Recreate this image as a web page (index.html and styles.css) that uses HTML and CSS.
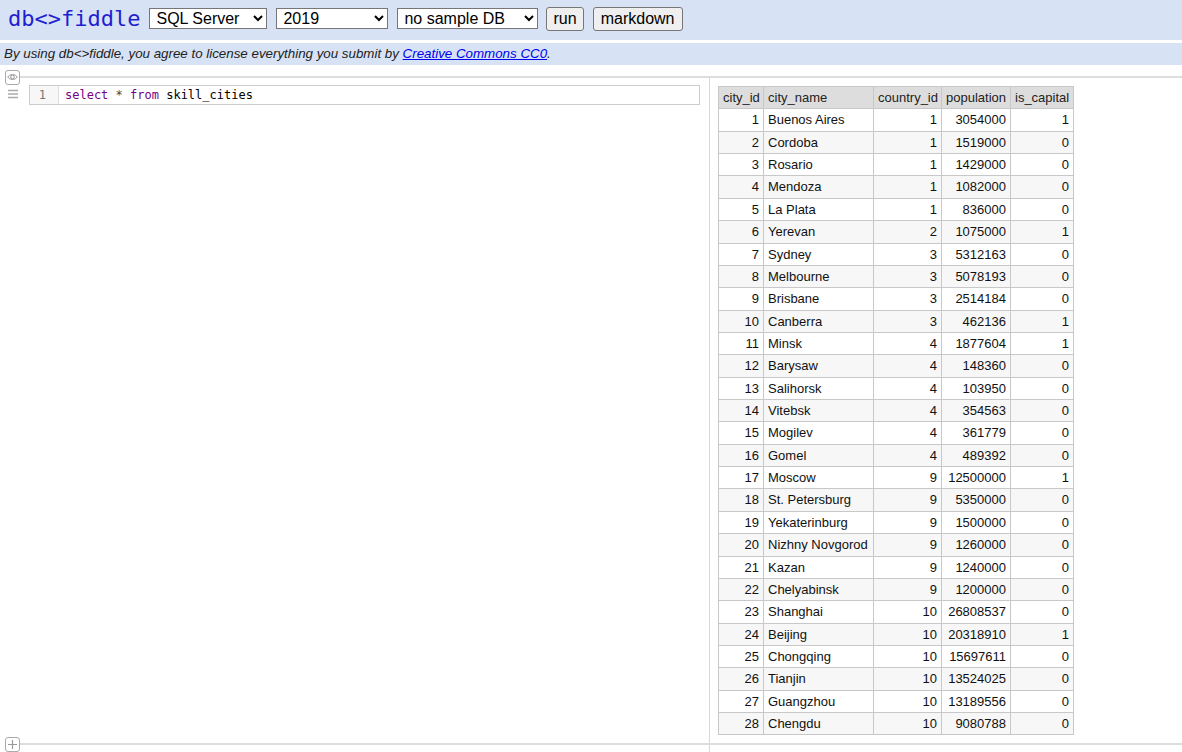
FILE: index.html
```html
<!DOCTYPE html>
<html>
<head>
<meta charset="utf-8">
<title>db&lt;&gt;fiddle</title>
<link rel="stylesheet" href="styles.css">
</head>
<body>
<header class="topbar">
  <span class="logo">db&lt;&gt;fiddle</span>
  <select class="sel sel-engine"><option>SQL Server</option></select>
  <select class="sel sel-version"><option>2019</option></select>
  <select class="sel sel-sample"><option>no sample DB</option></select>
  <button class="btn">run</button>
  <button class="btn btn-md">markdown</button>
</header>
<div class="notice">By using db&lt;&gt;fiddle, you agree to license everything you submit by <a href="#">Creative Commons CC0</a>.</div>

<div class="sep sep-top">
  <span class="sep-icon">
    <svg width="11" height="8" viewBox="0 0 11 8"><path d="M0.8 4 C2.5 0.8 8.5 0.8 10.2 4 C8.5 7.2 2.5 7.2 0.8 4 Z" fill="none" stroke="#999" stroke-width="1"/><circle cx="5.5" cy="4" r="1.8" fill="none" stroke="#999" stroke-width="1"/></svg>
  </span>
  <span class="sep-line"></span>
</div>

<div class="batch">
  <div class="left">
    <span class="handle">
      <svg width="10" height="10" viewBox="0 0 10 10"><path d="M0 1.5H10M0 5H10M0 8.5H10" stroke="#aaa" stroke-width="1.4"/></svg>
    </span>
    <div class="editor">
      <div class="gutter">1</div>
      <div class="code"><span class="kw">select</span> <span class="op">*</span> <span class="kw">from</span> skill_cities</div>
    </div>
  </div>
  <div class="right">
    <table class="result">
      <colgroup>
        <col class="c-id"><col class="c-name"><col class="c-country"><col class="c-pop"><col class="c-cap">
      </colgroup>
      <thead>
        <tr><th>city_id</th><th>city_name</th><th>country_id</th><th>population</th><th>is_capital</th></tr>
      </thead>
      <tbody>
        <tr><td class="n">1</td><td>Buenos Aires</td><td class="n">1</td><td class="n">3054000</td><td class="n">1</td></tr>
        <tr><td class="n">2</td><td>Cordoba</td><td class="n">1</td><td class="n">1519000</td><td class="n">0</td></tr>
        <tr><td class="n">3</td><td>Rosario</td><td class="n">1</td><td class="n">1429000</td><td class="n">0</td></tr>
        <tr><td class="n">4</td><td>Mendoza</td><td class="n">1</td><td class="n">1082000</td><td class="n">0</td></tr>
        <tr><td class="n">5</td><td>La Plata</td><td class="n">1</td><td class="n">836000</td><td class="n">0</td></tr>
        <tr><td class="n">6</td><td>Yerevan</td><td class="n">2</td><td class="n">1075000</td><td class="n">1</td></tr>
        <tr><td class="n">7</td><td>Sydney</td><td class="n">3</td><td class="n">5312163</td><td class="n">0</td></tr>
        <tr><td class="n">8</td><td>Melbourne</td><td class="n">3</td><td class="n">5078193</td><td class="n">0</td></tr>
        <tr><td class="n">9</td><td>Brisbane</td><td class="n">3</td><td class="n">2514184</td><td class="n">0</td></tr>
        <tr><td class="n">10</td><td>Canberra</td><td class="n">3</td><td class="n">462136</td><td class="n">1</td></tr>
        <tr><td class="n">11</td><td>Minsk</td><td class="n">4</td><td class="n">1877604</td><td class="n">1</td></tr>
        <tr><td class="n">12</td><td>Barysaw</td><td class="n">4</td><td class="n">148360</td><td class="n">0</td></tr>
        <tr><td class="n">13</td><td>Salihorsk</td><td class="n">4</td><td class="n">103950</td><td class="n">0</td></tr>
        <tr><td class="n">14</td><td>Vitebsk</td><td class="n">4</td><td class="n">354563</td><td class="n">0</td></tr>
        <tr><td class="n">15</td><td>Mogilev</td><td class="n">4</td><td class="n">361779</td><td class="n">0</td></tr>
        <tr><td class="n">16</td><td>Gomel</td><td class="n">4</td><td class="n">489392</td><td class="n">0</td></tr>
        <tr><td class="n">17</td><td>Moscow</td><td class="n">9</td><td class="n">12500000</td><td class="n">1</td></tr>
        <tr><td class="n">18</td><td>St. Petersburg</td><td class="n">9</td><td class="n">5350000</td><td class="n">0</td></tr>
        <tr><td class="n">19</td><td>Yekaterinburg</td><td class="n">9</td><td class="n">1500000</td><td class="n">0</td></tr>
        <tr><td class="n">20</td><td>Nizhny Novgorod</td><td class="n">9</td><td class="n">1260000</td><td class="n">0</td></tr>
        <tr><td class="n">21</td><td>Kazan</td><td class="n">9</td><td class="n">1240000</td><td class="n">0</td></tr>
        <tr><td class="n">22</td><td>Chelyabinsk</td><td class="n">9</td><td class="n">1200000</td><td class="n">0</td></tr>
        <tr><td class="n">23</td><td>Shanghai</td><td class="n">10</td><td class="n">26808537</td><td class="n">0</td></tr>
        <tr><td class="n">24</td><td>Beijing</td><td class="n">10</td><td class="n">20318910</td><td class="n">1</td></tr>
        <tr><td class="n">25</td><td>Chongqing</td><td class="n">10</td><td class="n">15697611</td><td class="n">0</td></tr>
        <tr><td class="n">26</td><td>Tianjin</td><td class="n">10</td><td class="n">13524025</td><td class="n">0</td></tr>
        <tr><td class="n">27</td><td>Guangzhou</td><td class="n">10</td><td class="n">13189556</td><td class="n">0</td></tr>
        <tr><td class="n">28</td><td>Chengdu</td><td class="n">10</td><td class="n">9080788</td><td class="n">0</td></tr>
      </tbody>
    </table>
  </div>
</div>

<div class="sep">
  <span class="sep-icon">
    <svg width="11" height="11" viewBox="0 0 11 11"><path d="M5.5 1V10M1 5.5H10" stroke="#999" stroke-width="1.2"/></svg>
  </span>
  <span class="sep-line"></span>
</div>
<div class="batch batch-empty">
  <div class="left"></div>
  <div class="right"></div>
</div>
</body>
</html>
```

FILE: styles.css
```css
html, body {
  margin: 0;
  padding: 0;
  overflow: hidden;
  background: #fff;
}
body {
  font-family: "Liberation Sans", Arial, sans-serif;
  color: #111;
}
.topbar {
  height: 37px;
  padding: 0 0 3px 8px;
  background: #d7e3f5;
  display: flex;
  align-items: center;
  gap: 8px;
}
.logo {
  font-family: "DejaVu Sans Mono", monospace;
  font-size: 22px;
  color: #1f1fd0;
}
.sel {
  font-family: "Liberation Sans", Arial, sans-serif;
  font-size: 16px;
  height: 21px;
  padding: 0 0 0 2px;
  border: 1px solid #767676;
  border-radius: 0;
  background: #fff;
  color: #000;
  margin-left: 1px;
}
.sel-engine { width: 118px; }
.sel-version { width: 112px; }
.sel-sample { width: 141px; }
.btn {
  font-family: "Liberation Sans", Arial, sans-serif;
  font-size: 16px;
  height: 24px;
  padding: 0 6px;
  border: 1px solid #767676;
  border-radius: 3px;
  background: #efefef;
  color: #000;
}
.btn-md {
  width: 90px;
  margin-left: 1px;
}
.notice {
  margin-top: 3px;
  height: 22px;
  line-height: 22px;
  background: #d7e3f5;
  font-size: 13.333px;
  font-style: italic;
  padding-left: 4px;
  color: #222;
}
.notice a {
  color: #0000ee;
}
.sep {
  display: flex;
  align-items: center;
  padding-left: 5px;
  height: 2px;
}
.sep-top {
  margin-top: 11px;
}
.sep-icon {
  flex: 0 0 auto;
  width: 13px;
  height: 13px;
  margin: -7px 0;
  border: 1px solid #aaa;
  border-radius: 3px;
  display: flex;
  align-items: center;
  justify-content: center;
  background: #fff;
}
.sep-line {
  flex: 1;
  height: 2px;
  background: #ddd;
}
.batch {
  display: grid;
  grid-template-columns: 709px 1fr;
}
.left {
  display: flex;
  align-items: flex-start;
  padding: 7px 0 0 8px;
  gap: 11px;
}
.handle {
  padding-top: 4px;
  width: 10px;
  display: flex;
}
.editor {
  flex: 0 0 671px;
  border: 1px solid #ccc;
  display: flex;
  box-sizing: border-box;
  height: 20px;
}
.gutter {
  width: 29px;
  background: #f7f7f7;
  border-right: 1px solid #ddd;
  font-family: "DejaVu Sans Mono", monospace;
  font-size: 12px;
  line-height: 18px;
  color: #777;
  text-align: right;
  padding-right: 12px;
  box-sizing: border-box;
}
.code {
  padding-left: 6px;
  font-family: "DejaVu Sans Mono", monospace;
  font-size: 12px;
  line-height: 18px;
  color: #000;
}
.kw { color: #708; }
.op { color: #444; }
.right {
  border-left: 1px solid #d8d8d8;
  padding: 8px 0 8px 8px;
}
.result {
  border-collapse: collapse;
  table-layout: fixed;
  width: 355px;
  font-size: 13px;
  color: #111;
}
.c-id { width: 45px; }
.c-name { width: 110px; }
.c-country { width: 68px; }
.c-pop { width: 69px; }
.c-cap { width: 63px; }
.result th, .result td {
  border: 1px solid #c8c8c8;
  padding: 3px 4px;
  line-height: 15.36px;
  white-space: nowrap;
  overflow: hidden;
}
.result th {
  background: #ddd;
  font-weight: normal;
  text-align: left;
  color: #222;
}
.result tbody tr:nth-child(even) {
  background: #f7f7f7;
}
.result td.n {
  text-align: right;
}
.batch-empty {
  height: 40px;
}
```
